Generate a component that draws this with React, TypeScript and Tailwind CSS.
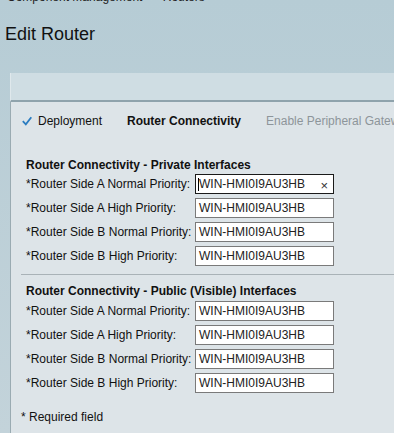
import React from "react";

const rowsLabels = [
  "*Router Side A Normal Priority:",
  "*Router Side A High Priority:",
  "*Router Side B Normal Priority:",
  "*Router Side B High Priority:",
];

function Row({ label, focused }: { label: string; focused?: boolean }) {
  return (
    <div className="flex items-center h-[20px] mb-[4px]">
      <div className="w-[169px] shrink-0 text-[12px] text-[#111] whitespace-nowrap">{label}</div>
      <div
        className={
          "relative shrink-0 w-[139px] h-[20px] bg-white flex items-center pl-[3px] text-[12px] text-[#222] " +
          (focused ? "border border-[#1a1a1a]" : "border border-[#7a7a7a]")
        }
      >
        {focused && <span className="absolute left-[2px] top-[3px] w-[1px] h-[13px] bg-black" />}
        <span>WIN-HMI0I9AU3HB</span>
        {focused && (
          <span className="absolute right-[5px] top-[1px] text-[13px] text-[#333]">×</span>
        )}
      </div>
    </div>
  );
}

export default function App() {
  return (
    <div
      className="w-[394px] h-[433px] overflow-hidden bg-gradient-to-b from-[#b6ccd5] to-[#c3d3da]"
      style={{ fontFamily: '"Liberation Sans", Arial, sans-serif' }}
    >
      <div className="h-[10px] relative">
        <div className="absolute left-[7px] top-[-12px] text-[12px] text-[#222] whitespace-nowrap">
          Component Management &nbsp;&gt;&nbsp; Routers
        </div>
      </div>
      <div className="pl-[5px] pt-[13px] text-[18px] text-[#111] leading-[22px]">Edit Router</div>
      <div className="ml-[10px] mt-[28px]">
        <div className="h-[29px] bg-[#cfdde3] border-l border-[#dfe8ec] border-b-2 border-b-[#8fa3ac]" />
        <div className="bg-[#dde4e8] border-l border-[#9aabb2] h-[340px] overflow-hidden">
          <div className="flex items-center h-[36px] pt-[2px] text-[12px] whitespace-nowrap">
            <svg width="10" height="10" viewBox="0 0 10 10" className="ml-[11px] mr-[6px] shrink-0">
              <path d="M0.8 5.2 L3.8 8.3 L9.3 1.2" stroke="#2a7cc0" strokeWidth="1.8" fill="none" />
            </svg>
            <span className="text-[#111] shrink-0">Deployment</span>
            <span className="ml-[25px] font-bold text-[#111] shrink-0">Router Connectivity</span>
            <span className="ml-[25px] text-[#8d959a] shrink-0">Enable Peripheral Gateway</span>
          </div>
          <div className="pl-[15px] pt-[19px]">
            <div className="text-[12px] font-bold text-[#111] h-[16px] leading-[16px]">
              Router Connectivity - Private Interfaces
            </div>
            <div className="mt-[1px]">
              {rowsLabels.map((l, i) => (
                <Row key={l} label={l} focused={i === 0} />
              ))}
            </div>
          </div>
          <div className="ml-[10px] mt-[8px] h-[1px] bg-[#a9b2b7]" />
          <div className="pl-[15px] pt-[8px]">
            <div className="text-[12px] font-bold text-[#111] h-[16px] leading-[16px]">
              Router Connectivity - Public (Visible) Interfaces
            </div>
            <div className="mt-[2px]">
              {rowsLabels.map((l) => (
                <Row key={l} label={l} />
              ))}
            </div>
          </div>
          <div className="pl-[10px] mt-[15px] text-[12px] text-[#111]">* Required field</div>
        </div>
      </div>
    </div>
  );
}
